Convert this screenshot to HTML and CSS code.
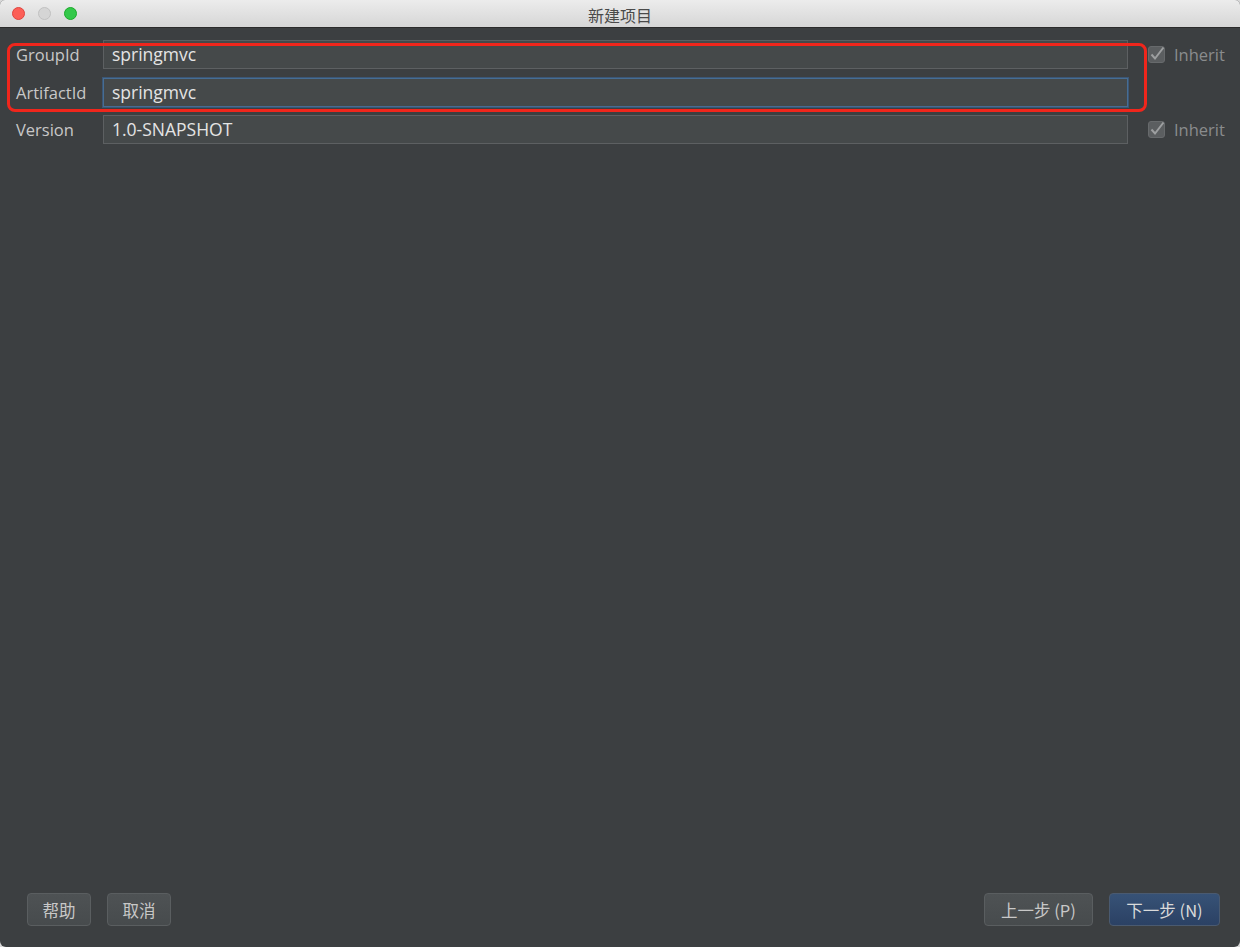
FILE: index.html
```html
<!DOCTYPE html>
<html lang="zh-CN">
<head>
    <meta charset="UTF-8">
    <title>新建项目</title>
    <link rel="stylesheet" href="styles.css">
</head>
<body>
    <div class="window">
        <header class="titlebar">
            <div class="lights">
                <span class="light close"></span>
                <span class="light mini"></span>
                <span class="light zoom"></span>
            </div>
            <div class="title">新建项目</div>
        </header>

        <main class="content">
            <div class="form">
                <label class="label">GroupId</label>
                <div class="field">springmvc</div>
                <div class="inherit">
                    <svg class="check" width="17" height="17" viewBox="0 0 17 17">
                        <rect x="0.5" y="0.5" width="16" height="16" rx="2.5" fill="#5b5e60" stroke="#676a6c"/>
                        <path d="M3.5 8.5 L7 12.5 L15.5 1.5" fill="none" stroke="#9d9fa0" stroke-width="2"/>
                    </svg>
                    <span>Inherit</span>
                </div>

                <label class="label">ArtifactId</label>
                <div class="field focused">springmvc</div>
                <div></div>

                <label class="label">Version</label>
                <div class="field">1.0-SNAPSHOT</div>
                <div class="inherit">
                    <svg class="check" width="17" height="17" viewBox="0 0 17 17">
                        <rect x="0.5" y="0.5" width="16" height="16" rx="2.5" fill="#5b5e60" stroke="#676a6c"/>
                        <path d="M3.5 8.5 L7 12.5 L15.5 1.5" fill="none" stroke="#9d9fa0" stroke-width="2"/>
                    </svg>
                    <span>Inherit</span>
                </div>
            </div>
            <div class="highlight"></div>
        </main>

        <footer class="buttons">
            <div class="group">
                <button class="btn">帮助</button>
                <button class="btn">取消</button>
            </div>
            <div class="group">
                <button class="btn wide">上一步 (P)</button>
                <button class="btn wide primary">下一步 (N)</button>
            </div>
        </footer>
    </div>
</body>
</html>
```

FILE: styles.css
```css
body {
    margin: 0;
    padding: 0;
    background: #d8d8d8;
    font-family: "Open Sans", "Liberation Sans", "Noto Sans CJK SC", sans-serif;
}

.window {
    width: 1240px;
    height: 947px;
    display: flex;
    flex-direction: column;
    background: #3c3f41;
    border-radius: 5px 5px 6px 6px;
    overflow: hidden;
}

.titlebar {
    height: 28px;
    flex-shrink: 0;
    position: relative;
    display: flex;
    align-items: center;
    justify-content: center;
    background: linear-gradient(#ececec, #d6d6d6);
    border-bottom: 1px solid #2b2b2b;
    box-sizing: border-box;
}

.lights {
    position: absolute;
    left: 12px;
    top: 7px;
    display: flex;
    gap: 13px;
}

.light {
    width: 13px;
    height: 13px;
    border-radius: 50%;
    box-sizing: border-box;
}

.light.close {
    background: #fc5f57;
    border: 1px solid #e0443e;
}

.light.mini {
    background: #d5d5d5;
    border: 1px solid #c1c1c1;
}

.light.zoom {
    background: #34c84a;
    border: 1px solid #1aab29;
}

.title {
    font-family: "Noto Sans CJK SC", sans-serif;
    font-size: 16px;
    color: #4a4a4a;
    padding-top: 2px;
}

.content {
    flex: 1;
    position: relative;
    padding: 12px 16px 0 16px;
}

.form {
    display: grid;
    grid-template-columns: 87px 1025px 1fr;
    grid-auto-rows: 29px;
    row-gap: 8.5px;
    align-items: center;
}

.label {
    color: #c8c8c8;
    font-size: 16.5px;
}

.field {
    height: 29px;
    box-sizing: border-box;
    border: 1px solid #5d6062;
    background: #45494a;
    color: #e4e4e4;
    font-size: 17.5px;
    line-height: 27px;
    padding-left: 8px;
}

.field.focused {
    border: 1px solid #466d94;
    box-shadow: 0 0 0 1px #3b5675;
}

.inherit {
    display: flex;
    align-items: center;
    gap: 9px;
    padding-left: 20px;
    color: #8a8c8d;
    font-size: 16.5px;
}

.check {
    flex-shrink: 0;
}

.highlight {
    position: absolute;
    left: 7px;
    top: 15px;
    width: 1140px;
    height: 69px;
    box-sizing: border-box;
    border: 3px solid #f0261c;
    border-radius: 8px;
}

.buttons {
    display: flex;
    justify-content: space-between;
    padding: 0 20px 21px 27px;
}

.group {
    display: flex;
    gap: 16px;
}

.btn {
    width: 64px;
    height: 33px;
    padding: 0;
    font-family: "Noto Sans CJK SC", sans-serif;
    font-size: 16.5px;
    color: #c8c8c8;
    background: linear-gradient(#4e5254, #474b4d);
    border: 1px solid #5a5e60;
    border-radius: 4px;
}

.btn.wide {
    width: 109px;
}

.btn.primary {
    width: 111px;
    background: linear-gradient(#375276, #2b4164);
    border-color: #4a5a70;
    color: #dadada;
}
```
